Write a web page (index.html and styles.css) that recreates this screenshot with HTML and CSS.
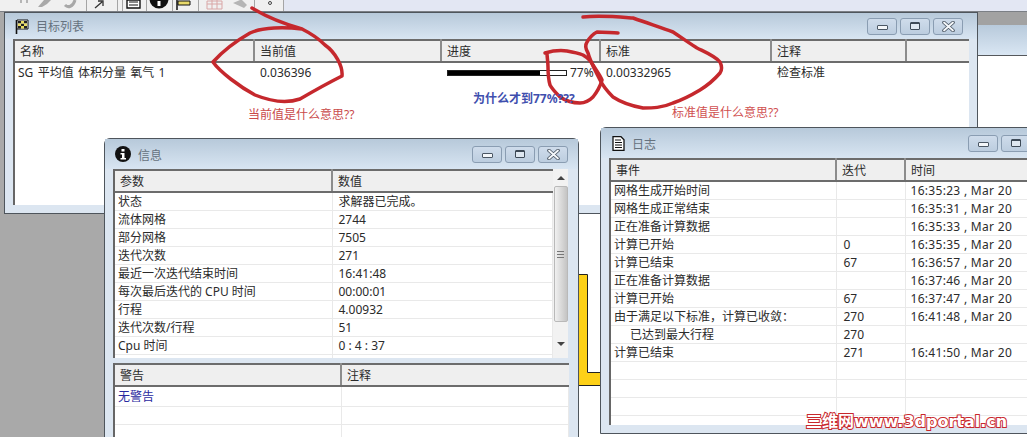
FILE: index.html
```html
<!DOCTYPE html>
<html lang="zh-CN">

<head>
  <meta charset="UTF-8">
  <title>目标列表</title>
  <link rel="stylesheet" href="styles.css">
</head>

<body>
  <div class="desktop">

    <div class="toolbar">
      <div class="tool-group">
        <svg class="tool-icons" width="284" height="11" viewBox="0 0 284 11">
          <!-- dimmed tools -->
          <path d="M20 0h2v3h-2zM26 0h2v3h-2z" fill="#b5b5b5" />
          <path d="M38 7l6-7h7l-4 4-5 3z" fill="#a8a8a8" />
          <path d="M65 5c3 3 8 2 10-5" fill="none" stroke="#a8a8a8" stroke-width="3" />
          <path d="M95 8l7-6M98 1h5v5" fill="none" stroke="#333" stroke-width="1.3" />
          <!-- separators -->
          <path d="M86.500 0v11M117.500 0v11M122.500 0v11M146.500 0v11M172.500 0v11M198.500 0v11M254.500 0v11M283.500 0v11" stroke="#a5a5a5" />
          <!-- log -->
          <path d="M127 0h13v8h-13z" fill="#fff" stroke="#111" stroke-width="1.400" />
          <path d="M129 2h9M129 5h9" stroke="#111" />
          <!-- info -->
          <circle cx="159" cy="-1" r="9.500" fill="#111" />
          <rect x="157.500" y="1" width="3" height="5" fill="#fff" />
          <!-- flag -->
          <path d="M177 0v10" stroke="#111" stroke-width="1.500" />
          <path d="M178 1h12v4h-12z" fill="#e8d96a" stroke="#111" />
          <!-- grid -->
          <path d="M207 1h15v8h-15zM207 4h15M212 0v9M217 0v9" fill="none" stroke="#d9a6a6" />
          <!-- diamond -->
          <path d="M233 3l7-3h2l5 5-3 3z" fill="#b5b5b5" />
          <circle cx="270" cy="3" r="1.500" fill="none" stroke="#444" />
        </svg>
      </div>
    </div>

    <div class="rear-win">
      <div class="rear-strip"></div>
      <div class="rear-title"></div>
      <div class="rear-client"></div>
    </div>

    <svg class="yellow-shape" width="24" height="113" viewBox="0 0 24 113">
      <path d="M0 1h9v98h15v12h-24z" fill="#fdd017" />
      <path d="M0 .5h9.500v98h14.500M24 111.500h-24" fill="none" stroke="#222" />
    </svg>

    <!-- goal list -->
    <section class="win win-goals">
      <header class="win-title">
        <svg class="win-icon" width="14" height="15" viewBox="0 0 14 15">
          <path d="M1.500 1v14" stroke="#111" stroke-width="1.600" />
          <path d="M2 1h11v9H2z" fill="#fff" stroke="#111" />
          <path d="M3 2h3v2.500H3zM9 2h3v2.500H9zM6 4.500h3V7H6zM3 7h3v2.500H3zM9 7h3v2.500H9z" fill="#222" />
          <path d="M6 2h3v2.500H6zM3 4.500h3V7H3zM9 4.500h3V7H9zM6 7h3v2.500H6z" fill="#e9dc62" />
        </svg>
        <span class="win-name">目标列表</span>
        <div class="win-buttons">
          <button class="win-btn"><span class="ico-min"></span></button>
          <button class="win-btn"><span class="ico-max"></span></button>
          <button class="win-btn">
            <svg class="ico-close" width="13" height="11" viewBox="0 0 13 11">
              <path class="x-out" d="M2 1.500l9 8M11 1.500l-9 8" />
              <path class="x-in" d="M2 1.500l9 8M11 1.500l-9 8" />
            </svg>
          </button>
        </div>
      </header>
      <div class="pane pane-goals">
        <table class="grid">
          <colgroup>
            <col class="g1">
            <col class="g2">
            <col class="g3">
            <col class="g4">
            <col class="g5">
            <col>
          </colgroup>
          <thead>
            <tr>
              <th>名称</th>
              <th>当前值</th>
              <th>进度</th>
              <th>标准</th>
              <th>注释</th>
              <th></th>
            </tr>
          </thead>
          <tbody class="goal-body">
            <tr>
              <td class="goal-name">SG 平均值 体积分量 氧气 1</td>
              <td>0.036396</td>
              <td>
                <div class="progress">
                  <div class="progress-track">
                    <div class="progress-fill" style="width: 78%"></div>
                  </div>
                  <span>77%</span>
                </div>
              </td>
              <td>0.00332965</td>
              <td>检查标准</td>
              <td></td>
            </tr>
          </tbody>
        </table>
      </div>
    </section>

    <!-- info -->
    <section class="win win-info">
      <header class="win-title">
        <svg class="win-icon" width="16" height="16" viewBox="0 0 16 16">
          <circle cx="8" cy="8" r="8" fill="#111" />
          <path d="M6.500 3h3v2.500h-3zM5.500 7h4v5h1.500v1.500H5.500V12H7V8.500H5.500z" fill="#fff" />
        </svg>
        <span class="win-name">信息</span>
        <div class="win-buttons">
          <button class="win-btn"><span class="ico-min"></span></button>
          <button class="win-btn"><span class="ico-max"></span></button>
          <button class="win-btn">
            <svg class="ico-close" width="13" height="11" viewBox="0 0 13 11">
              <path class="x-out" d="M2 1.500l9 8M11 1.500l-9 8" />
              <path class="x-in" d="M2 1.500l9 8M11 1.500l-9 8" />
            </svg>
          </button>
        </div>
      </header>
      <div class="info-top">
        <div class="pane pane-params">
          <table class="grid">
            <colgroup>
              <col class="p1">
              <col>
            </colgroup>
            <thead>
              <tr>
                <th>参数</th>
                <th>数值</th>
              </tr>
            </thead>
            <tbody>
              <tr><td>状态</td><td>求解器已完成。</td></tr>
              <tr><td>流体网格</td><td>2744</td></tr>
              <tr><td>部分网格</td><td>7505</td></tr>
              <tr><td>迭代次数</td><td>271</td></tr>
              <tr><td>最近一次迭代结束时间</td><td>16:41:48</td></tr>
              <tr><td>每次最后迭代的 CPU 时间</td><td>00:00:01</td></tr>
              <tr><td>行程</td><td>4.00932</td></tr>
              <tr><td>迭代次数/行程</td><td>51</td></tr>
              <tr><td>Cpu 时间</td><td>0 : 4 : 37</td></tr>
              <tr><td></td><td></td></tr>
            </tbody>
          </table>
        </div>
        <div class="scrollbar">
          <span class="arrow-up"></span>
          <div class="thumb"><span class="grip"></span></div>
          <span class="arrow-down"></span>
        </div>
      </div>
      <div class="pane pane-warn">
        <table class="grid">
          <colgroup>
            <col class="w1">
            <col>
          </colgroup>
          <thead>
            <tr>
              <th>警告</th>
              <th>注释</th>
            </tr>
          </thead>
          <tbody>
            <tr><td class="no-warn">无警告</td><td></td></tr>
            <tr><td></td><td></td></tr>
            <tr><td></td><td></td></tr>
          </tbody>
        </table>
      </div>
    </section>

    <!-- log -->
    <section class="win win-log">
      <header class="win-title">
        <svg class="win-icon" width="13" height="15" viewBox="0 0 13 15">
          <path d="M1 .7h8l3 3v10.600H1z" fill="#fff" stroke="#111" stroke-width="1.300" />
          <path d="M3 4h6M3 6.500h7M3 9h7M3 11.500h7" stroke="#111" />
        </svg>
        <span class="win-name">日志</span>
        <div class="win-buttons">
          <button class="win-btn"><span class="ico-min"></span></button>
          <button class="win-btn"><span class="ico-max"></span></button>
        </div>
      </header>
      <div class="pane pane-log">
        <table class="grid">
          <colgroup>
            <col class="l1">
            <col class="l2">
            <col>
          </colgroup>
          <thead>
            <tr>
              <th>事件</th>
              <th>迭代</th>
              <th>时间</th>
            </tr>
          </thead>
          <tbody>
            <tr><td>网格生成开始时间</td><td></td><td>16:35:23 , Mar 20</td></tr>
            <tr><td>网格生成正常结束</td><td></td><td>16:35:31 , Mar 20</td></tr>
            <tr><td>正在准备计算数据</td><td></td><td>16:35:33 , Mar 20</td></tr>
            <tr><td>计算已开始</td><td>0</td><td>16:35:35 , Mar 20</td></tr>
            <tr><td>计算已结束</td><td>67</td><td>16:36:57 , Mar 20</td></tr>
            <tr><td>正在准备计算数据</td><td></td><td>16:37:46 , Mar 20</td></tr>
            <tr><td>计算已开始</td><td>67</td><td>16:37:47 , Mar 20</td></tr>
            <tr><td>由于满足以下标准，计算已收敛：</td><td>270</td><td>16:41:48 , Mar 20</td></tr>
            <tr><td class="indent">已达到最大行程</td><td>270</td><td></td></tr>
            <tr><td>计算已结束</td><td>271</td><td>16:41:50 , Mar 20</td></tr>
            <tr><td></td><td></td><td></td></tr>
            <tr><td></td><td></td><td></td></tr>
            <tr><td></td><td></td><td></td></tr>
            <tr><td></td><td></td><td></td></tr>
          </tbody>
        </table>
      </div>
    </section>

    <!-- hand drawn notes on top of the screenshot -->
    <svg class="scribbles" width="1027" height="437" viewBox="0 0 1027 437">
      <path d="M252 8C265 16 285 24 302 29C285 27 262 27 250 33C236 41 222 52 213 62C220 72 240 87 255 95C270 101 285 104 300 99C312 92 330 82 342 76C343 66 335 52 325 45C318 38 310 33 302 29" />
      <path d="M583 17C600 15 620 17 633 18C650 24 662 28 673 32C685 40 692 45 697 48C705 52 715 56 720 62C722 66 722 70 720 73C714 80 708 85 700 90C690 96 682 100 673 103C662 108 652 108 643 108C632 106 622 103 613 97C607 91 603 86 600 80C595 70 590 61 588 53C585 48 585 45 587 42C590 37 593 34 597 32C605 32 612 33 618 33" />
      <path d="M545 53C552 51 560 50 567 51C573 52 578 53 583 55C588 58 591 61 593 65C596 70 600 75 602 80C600 87 597 92 593 97C589 101 585 103 580 103C573 103 566 101 560 97C556 93 552 89 550 85C548 78 548 72 548 67C548 62 547 57 547 53" />
    </svg>
    <span class="note note-current">当前值是什么意思??</span>
    <span class="note note-why">为什么才到77%???</span>
    <span class="note note-standard">标准值是什么意思??</span>
    <span class="watermark">三维网www.3dportal.cn</span>

  </div>
</body>

</html>
```

FILE: styles.css
```css
* {
  box-sizing: border-box;
}

body {
  margin: 0;
  font-family: "Noto Sans", "Noto Sans CJK SC", sans-serif;
  font-size: 12px;
  color: #2b2b2b;
}

.desktop {
  position: relative;
  width: 1027px;
  height: 437px;
  overflow: hidden;
  background-color: #a9a9a9;
}

.toolbar {
  position: absolute;
  top: 0;
  left: 0;
  width: 100%;
  height: 12px;
  display: flex;
  background-color: #e3e7f3;
  border-bottom: 1px solid #7b7f85;
}

.tool-group {
  width: 284px;
  height: 11px;
  background-color: #f0f0f0;
}

.tool-icons {
  display: block;
}

.rear-win {
  position: absolute;
  top: 12px;
  left: 500px;
  right: 0;
  bottom: 0;
  display: flex;
  flex-direction: column;
}

.rear-strip {
  height: 13px;
  background-color: #a2a2a2;
}

.rear-title {
  height: 31px;
  background: linear-gradient(#b8cadb, #d9e6f3);
  border-bottom: 1px solid #55585c;
}

.rear-client {
  flex: 1;
  background-color: #fff;
}

.yellow-shape {
  position: absolute;
  left: 578px;
  top: 274px;
}

.win {
  position: absolute;
  display: flex;
  flex-direction: column;
  background-color: #dce6f1;
  border: 1px solid #4e555c;
  border-radius: 6px 6px 0 0;
  padding: 0 8px;
}

.win-goals {
  top: 12px;
  left: 4px;
  width: 974px;
  height: 202px;
  border-radius: 0;
}

.win-info {
  top: 138px;
  left: 104px;
  width: 475px;
  height: 310px;
}

.win-log {
  top: 127px;
  left: 600px;
  width: 460px;
  height: 307px;
}

.win-title {
  display: flex;
  align-items: center;
  gap: 7px;
  height: 30px;
  flex: none;
  margin: 0 -8px;
  padding: 0 10px 0 10px;
  background: linear-gradient(#b7c9da, #d8e5f2);
}

.win-goals .win-title {
  height: 26px;
  padding-right: 14px;
}

.win-log .win-title {
  padding-left: 11px;
}

.win-icon {
  flex: none;
}

.win-name {
  flex: none;
  color: #66727e;
  font-size: 12px;
  padding-top: 2px;
  white-space: nowrap;
}

.win-goals .win-name {
  padding-top: 0;
}

.win-buttons {
  display: flex;
  flex: none;
  gap: 3px;
  margin-left: auto;
}

.win-log .win-buttons {
  margin-left: 305px;
}

.win-btn {
  display: flex;
  align-items: center;
  justify-content: center;
  width: 30px;
  height: 17px;
  padding: 0;
  background: linear-gradient(#cfdceb, #bccddf);
  border: 1px solid #8a9db2;
  border-radius: 3px;
}

.ico-min {
  width: 11px;
  height: 5px;
  margin-top: 3px;
  background-color: #f4f7fa;
  border: 1px solid #4b5764;
  border-radius: 1px;
}

.ico-max {
  width: 10px;
  height: 8px;
  background-color: #dfe8f1;
  border: 1px solid #3e4a57;
  border-radius: 1px;
  box-shadow: inset 0 1px 0 #3e4a57;
}

.ico-close {
  fill: none;
  stroke-linecap: round;
}

.x-out {
  stroke: #4b5764;
  stroke-width: 3.6;
}

.x-in {
  stroke: #f5f8fb;
  stroke-width: 1.8;
}

.pane {
  overflow: hidden;
  background-color: #fff;
  border-left: 2px solid #666;
}

.pane-goals {
  flex: 1;
  margin-bottom: 8px;
}

.info-top {
  display: flex;
  height: 189px;
  flex: none;
  margin-right: 1px;
}

.pane-params {
  width: 440px;
  flex: none;
}

.scrollbar {
  display: flex;
  flex-direction: column;
  align-items: center;
  width: 15px;
  background-color: #f2f2f2;
}

.arrow-up,
.arrow-down {
  width: 0;
  height: 0;
  flex: none;
  border-left: 4px solid transparent;
  border-right: 4px solid transparent;
}

.arrow-up {
  margin-top: 7px;
  border-bottom: 4px solid #444;
}

.arrow-down {
  margin-top: 20px;
  border-top: 4px solid #444;
}

.thumb {
  display: flex;
  align-items: center;
  justify-content: center;
  width: 14px;
  height: 136px;
  margin-top: 6px;
  background: linear-gradient(90deg, #f0f0f0, #c4c4c4);
  border: 1px solid #b9b9b9;
  border-radius: 2px;
}

.grip {
  width: 7px;
  height: 7px;
  border-top: 1px solid #777;
  border-bottom: 1px solid #777;
  background: linear-gradient(#777, #777) center / 100% 1px no-repeat;
}

.pane-warn {
  flex: none;
  width: 456px;
  height: 80px;
  margin-top: 5px;
}

.pane-warn tbody tr:first-child td {
  height: 20px;
}

.pane-log {
  width: 430px;
  height: 267px;
}

.grid {
  width: 100%;
  table-layout: fixed;
  border-collapse: collapse;
}

.grid th {
  height: 22px;
  padding: 0 0 0 5px;
  text-align: left;
  font-weight: 400;
  background-color: #efefef;
  border-top: 2px solid #6c6c6c;
  border-bottom: 2px solid #6c6c6c;
  border-right: 2px solid #8c8c8c;
  white-space: nowrap;
}

.grid th:last-child {
  border-right: none;
}

.grid td {
  height: 18px;
  padding: 0 0 0 6px;
  line-height: 17px;
  border-bottom: 1px solid #e9e9e9;
  border-right: 1px solid #e9e9e9;
  white-space: nowrap;
}

.grid td:first-child {
  padding-left: 3px;
}

.pane-log td:nth-child(2) {
  padding-left: 7px;
}

.pane-log td:nth-child(3) {
  padding-left: 5px;
  letter-spacing: 0.3px;
}

.goal-body td {
  height: 20px;
  border: none;
}

.grid .goal-name {
  word-spacing: 1.2px;
}

.g1 {
  width: 239px;
}

.g2 {
  width: 187px;
}

.g3 {
  width: 159px;
}

.g4 {
  width: 171px;
}

.g5 {
  width: 135px;
}

.p1 {
  width: 217px;
}

.w1 {
  width: 226px;
}

.l1 {
  width: 225px;
}

.l2 {
  width: 69px;
}

.progress {
  display: flex;
  align-items: center;
  gap: 3px;
}

.progress-track {
  width: 120px;
  height: 6px;
  flex: none;
  background-color: #fff;
  border: 1px solid #222;
}

.progress-fill {
  height: 100%;
  background-color: #000;
}

.no-warn {
  color: #2a2aa0;
}

.grid td.indent {
  padding-left: 19px;
}

.scribbles {
  position: absolute;
  top: 0;
  left: 0;
  fill: none;
  stroke: #c5282d;
  stroke-width: 3.5;
  stroke-linecap: round;
  stroke-linejoin: round;
}

.note {
  position: absolute;
  white-space: nowrap;
  line-height: 14px;
}

.note-current {
  left: 248px;
  top: 108px;
  color: #c94a4a;
}

.note-why {
  left: 473px;
  top: 92px;
  color: #3f4fae;
  font-weight: 700;
}

.note-standard {
  left: 672px;
  top: 106px;
  color: #d05050;
}

.watermark {
  position: absolute;
  left: 806px;
  top: 412px;
  font-family: "DejaVu Sans", "Noto Sans CJK SC", sans-serif;
  font-size: 16px;
  font-weight: 700;
  line-height: 20px;
  white-space: nowrap;
  color: #fff;
  -webkit-text-stroke: 2px #c8282c;
  paint-order: stroke fill;
}
```
